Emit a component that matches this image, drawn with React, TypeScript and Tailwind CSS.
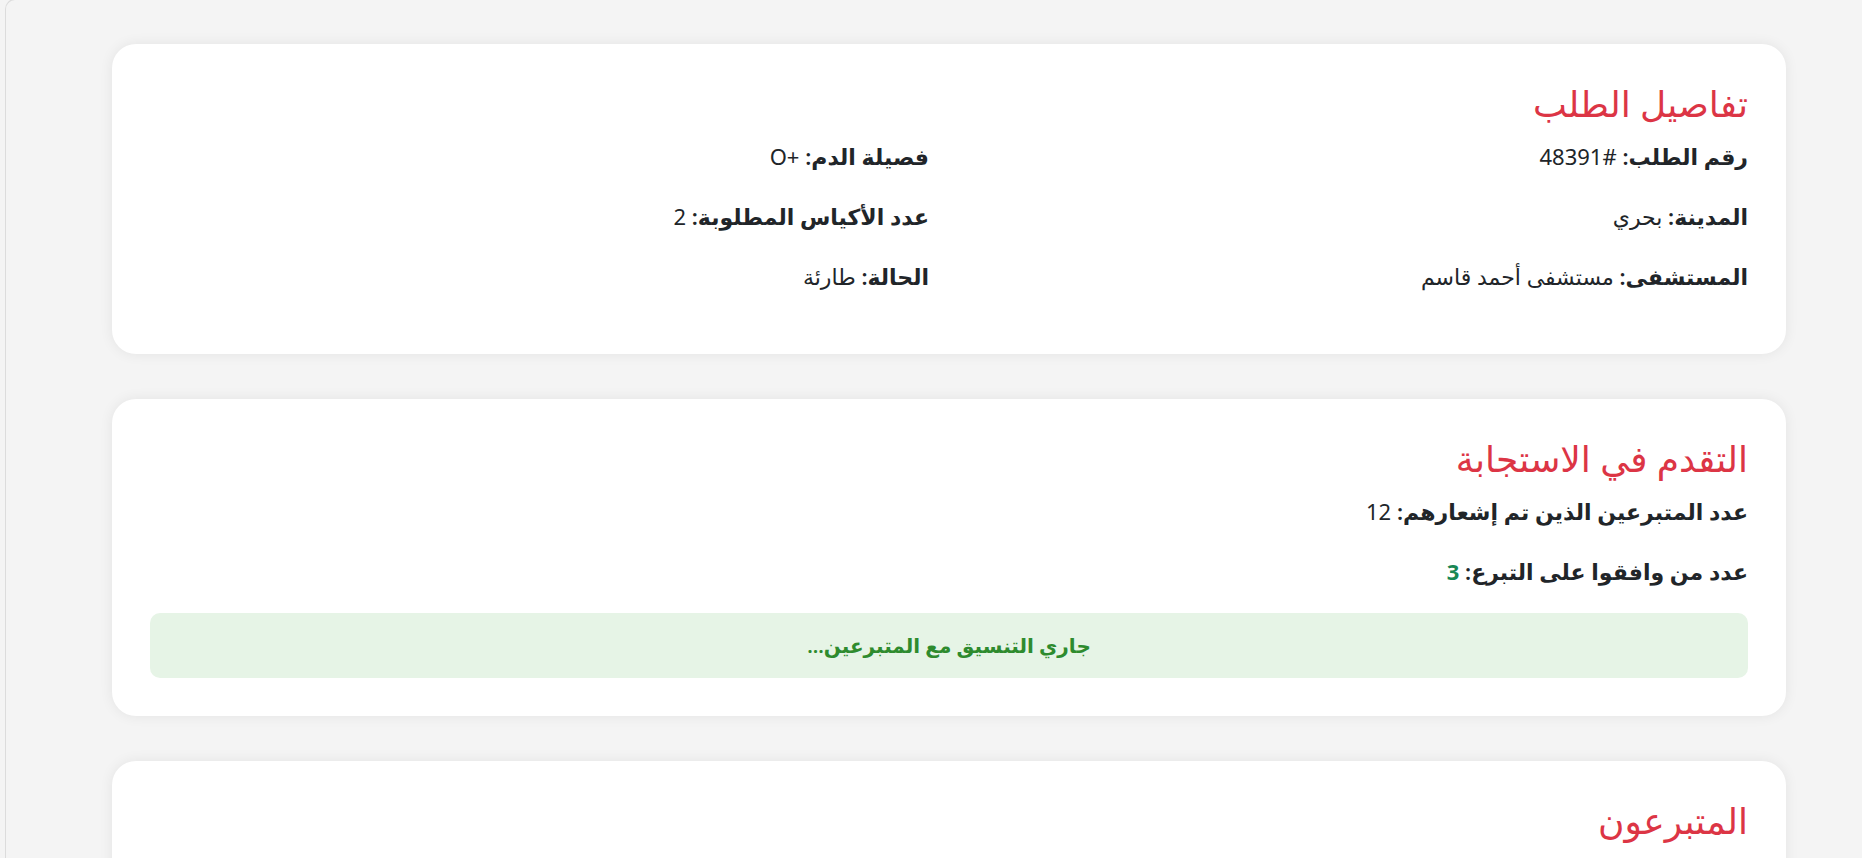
import React from "react";

const details: { label: string; value: React.ReactNode }[] = [
  { label: "رقم الطلب:", value: "#48391" },
  { label: "فصيلة الدم:", value: <bdi dir="ltr">O+</bdi> },
  { label: "المدينة:", value: "بحري" },
  { label: "عدد الأكياس المطلوبة:", value: "2" },
  { label: "المستشفى:", value: "مستشفى أحمد قاسم" },
  { label: "الحالة:", value: "طارئة" },
];

function Card({ title, children }: { title: string; children?: React.ReactNode }) {
  return (
    <section className="rounded-[24px] bg-white px-[38px] pt-[38px] pb-[38px] shadow-[0_0_14px_rgba(0,0,0,0.07)]">
      <h2 className="mb-[16px] text-[36px] leading-[43px] text-[#dc3545]">{title}</h2>
      {children}
    </section>
  );
}

export default function App() {
  return (
    <div
      dir="rtl"
      className="min-h-screen bg-[#f4f4f4] text-[22px] text-[#212529]"
      style={{ fontFamily: '"Segoe UI", "Noto Sans", "DejaVu Sans", sans-serif' }}
    >
      <div className="ml-[5px] -mt-px min-h-screen rounded-tl-[10px] border-t border-l border-[#dcdcdc] pt-[44px] pr-[76px] pl-[106px]">
        <div className="flex flex-col gap-[45px]">
          <Card title="تفاصيل الطلب">
            <div className="grid grid-cols-2 gap-x-[40px] gap-y-[30px] pb-[25px]">
              {details.map((d) => (
                <p key={d.label} className="leading-[30px]">
                  <strong className="font-semibold">{d.label}</strong> {d.value}
                </p>
              ))}
            </div>
          </Card>

          <Card title="التقدم في الاستجابة">
            <div className="flex flex-col gap-y-[30px]">
              <p className="leading-[30px]">
                <strong className="font-semibold">عدد المتبرعين الذين تم إشعارهم:</strong> 12
              </p>
              <p className="leading-[30px]">
                <strong className="font-semibold">عدد من وافقوا على التبرع:</strong>{" "}
                <span className="font-bold text-[#198754]">3</span>
              </p>
            </div>
            <div className="mt-[27px] flex h-[65px] items-center justify-center rounded-[10px] bg-[#e6f4e6] text-[20px] font-semibold text-[#2e8b2e]">
              جاري التنسيق مع المتبرعين...
            </div>
          </Card>

          <Card title="المتبرعون">
            <div className="h-[60px]" />
          </Card>
        </div>
      </div>
    </div>
  );
}
